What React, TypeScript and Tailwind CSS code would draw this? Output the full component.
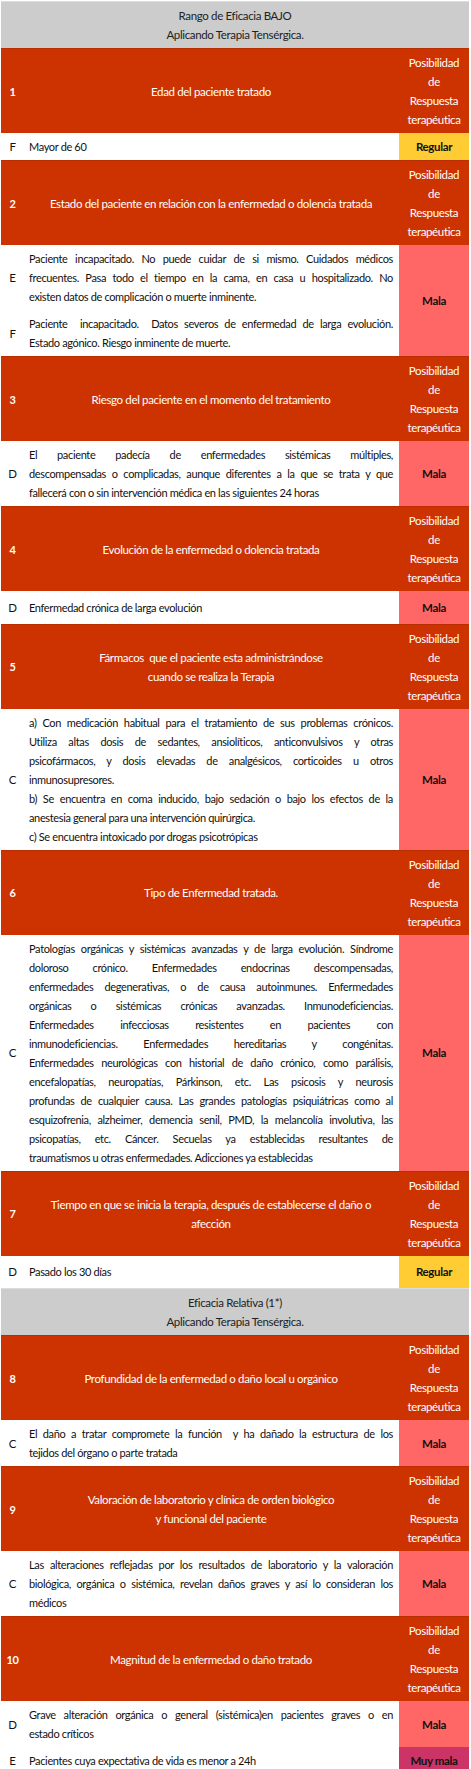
import React from "react";

type Tone = "mala" | "regular" | "muy";

type Row = {
  letter: string;
  paras: string[][];
  result?: { label: string; tone: Tone; span?: number };
  tall?: boolean;
};

type Section =
  | { kind: "header"; lines: string[] }
  | { kind: "factor"; num: string; title: string[]; rows: Row[] };

const toneCls: Record<Tone, string> = {
  mala: "bg-[#ff6666]",
  regular: "bg-[#ffcc33]",
  muy: "bg-[#cc3366]",
};

const sections: Section[] = [
  { kind: "header", lines: ["Rango de Eficacia BAJO", "Aplicando Terapia Tensérgica."] },
  {
    kind: "factor",
    num: "1",
    title: ["Edad del paciente tratado"],
    rows: [{ letter: "F", paras: [["Mayor de 60"]], result: { label: "Regular", tone: "regular" } }],
  },
  {
    kind: "factor",
    num: "2",
    title: ["Estado del paciente en relación con la enfermedad o dolencia tratada"],
    rows: [
      {
        letter: "E",
        paras: [
          [
            "Paciente incapacitado. No puede cuidar de si mismo. Cuidados médicos",
            "frecuentes. Pasa todo el tiempo en la cama, en casa u hospitalizado. No",
            "existen datos de complicación o muerte inminente.",
          ],
        ],
        result: { label: "Mala", tone: "mala", span: 2 },
      },
      {
        letter: "F",
        paras: [
          [
            "Paciente  incapacitado.  Datos severos de enfermedad de larga evolución.",
            "Estado agónico. Riesgo inminente de muerte.",
          ],
        ],
      },
    ],
  },
  {
    kind: "factor",
    num: "3",
    title: ["Riesgo del paciente en el momento del tratamiento"],
    rows: [
      {
        letter: "D",
        paras: [
          [
            "El paciente padecía de enfermedades sistémicas múltiples,",
            "descompensadas o complicadas, aunque diferentes a la que se trata y que",
            "fallecerá con o sin intervención médica en las siguientes 24 horas",
          ],
        ],
        result: { label: "Mala", tone: "mala" },
      },
    ],
  },
  {
    kind: "factor",
    num: "4",
    title: ["Evolución de la enfermedad o dolencia tratada"],
    rows: [
      {
        letter: "D",
        paras: [["Enfermedad crónica de larga evolución"]],
        result: { label: "Mala", tone: "mala" },
        tall: true,
      },
    ],
  },
  {
    kind: "factor",
    num: "5",
    title: ["Fármacos  que el paciente esta administrándose", "cuando se realiza la Terapia"],
    rows: [
      {
        letter: "C",
        paras: [
          [
            "a) Con medicación habitual para el tratamiento de sus problemas crónicos.",
            "Utiliza altas dosis de sedantes, ansiolíticos, anticonvulsivos y otras",
            "psicofármacos, y dosis elevadas de analgésicos, corticoides u otros",
            "inmunosupresores.",
          ],
          [
            "b) Se encuentra en coma inducido, bajo sedación o bajo los efectos de la",
            "anestesia general para una intervención quirúrgica.",
          ],
          ["c) Se encuentra intoxicado por drogas psicotrópicas"],
        ],
        result: { label: "Mala", tone: "mala" },
      },
    ],
  },
  {
    kind: "factor",
    num: "6",
    title: ["Tipo de Enfermedad tratada."],
    rows: [
      {
        letter: "C",
        paras: [
          [
            "Patologías orgánicas y sistémicas avanzadas y de larga evolución. Síndrome",
            "doloroso crónico. Enfermedades endocrinas descompensadas,",
            "enfermedades degenerativas, o de causa autoinmunes. Enfermedades",
            "orgánicas o sistémicas crónicas avanzadas. Inmunodeficiencias.",
            "Enfermedades infecciosas resistentes en pacientes con",
            "inmunodeficiencias. Enfermedades hereditarias y congénitas.",
            "Enfermedades neurológicas con historial de daño crónico, como parálisis,",
            "encefalopatías, neuropatías, Párkinson, etc. Las psicosis y neurosis",
            "profundas de cualquier causa. Las grandes patologías psiquiátricas como al",
            "esquizofrenia, alzheimer, demencia senil, PMD, la melancolía involutiva, las",
            "psicopatías, etc. Cáncer. Secuelas ya establecidas resultantes de",
            "traumatismos u otras enfermedades. Adicciones ya establecidas",
          ],
        ],
        result: { label: "Mala", tone: "mala" },
      },
    ],
  },
  {
    kind: "factor",
    num: "7",
    title: ["Tiempo en que se inicia la terapia, después de establecerse el daño o", "afección"],
    rows: [
      {
        letter: "D",
        paras: [["Pasado los 30 días"]],
        result: { label: "Regular", tone: "regular" },
        tall: true,
      },
    ],
  },
  { kind: "header", lines: ["Eficacia Relativa (1*)", "Aplicando Terapia Tensérgica."] },
  {
    kind: "factor",
    num: "8",
    title: ["Profundidad de la enfermedad o daño local u orgánico"],
    rows: [
      {
        letter: "C",
        paras: [
          [
            "El daño a tratar compromete la función  y ha dañado la estructura de los",
            "tejidos del órgano o parte tratada",
          ],
        ],
        result: { label: "Mala", tone: "mala" },
      },
    ],
  },
  {
    kind: "factor",
    num: "9",
    title: ["Valoración de laboratorio y clínica de orden biológico", "y funcional del paciente"],
    rows: [
      {
        letter: "C",
        paras: [
          [
            "Las alteraciones reflejadas por los resultados de laboratorio y la valoración",
            "biológica, orgánica o sistémica, revelan daños graves y así lo consideran los",
            "médicos",
          ],
        ],
        result: { label: "Mala", tone: "mala" },
      },
    ],
  },
  {
    kind: "factor",
    num: "10",
    title: ["Magnitud de la enfermedad o daño tratado"],
    rows: [
      {
        letter: "D",
        paras: [
          [
            "Grave alteración orgánica o general (sistémica)en pacientes graves o en",
            "estado críticos",
          ],
        ],
        result: { label: "Mala", tone: "mala" },
      },
      {
        letter: "E",
        paras: [["Pacientes cuya expectativa de vida es menor a 24h"]],
        result: { label: "Muy mala", tone: "muy" },
      },
    ],
  },
];

const Lines = ({ paras }: { paras: string[][] }) => (
  <>
    {paras.map((p, pi) =>
      p.map((line, i) => (
        <div
          key={`${pi}-${i}`}
          className={
            i < p.length - 1
              ? "text-justify [text-align-last:justify] whitespace-pre-wrap"
              : "text-left whitespace-pre-wrap"
          }
        >
          {line}
        </div>
      ))
    )}
  </>
);

const App = () => {
  return (
    <div className="w-[471px] min-h-[1769px] bg-white pt-[1px] font-['Lato','Open_Sans',sans-serif] text-[11px] tracking-[-0.35px] leading-[19px] text-[#111111]">
      <table className="table-fixed border-collapse w-[468px] ml-[1px]">
        <colgroup>
          <col className="w-[23px]" />
          <col className="w-[375px]" />
          <col className="w-[70px]" />
        </colgroup>
        <tbody>
          {sections.map((s, si) => {
            if (s.kind === "header") {
              return (
                <tr key={si} className="bg-[#cccccc] border-t border-[#dddddd]">
                  <td colSpan={3} className="py-[4px] text-center text-[#222222] text-[11.5px]">
                    {s.lines.map((l) => (
                      <div key={l}>{l}</div>
                    ))}
                  </td>
                </tr>
              );
            }
            return (
              <React.Fragment key={si}>
                <tr className="bg-[#cc3300] text-white border-t border-[#b82e00]">
                  <td className="py-[4px] text-center font-bold">{s.num}</td>
                  <td className="py-[4px] pl-[5px] pr-[6px] text-center text-[11.5px]">
                    {s.title.map((l) => (
                      <div key={l} className="whitespace-pre-wrap">
                        {l}
                      </div>
                    ))}
                  </td>
                  <td className="py-[4px] text-center text-[11.5px]">
                    <div>Posibilidad</div>
                    <div>de</div>
                    <div>Respuesta</div>
                    <div>terapéutica</div>
                  </td>
                </tr>
                {s.rows.map((r, ri) => (
                  <tr key={ri} className={r.tall ? "h-[33px]" : ""}>
                    <td className="py-[4px] text-center align-middle text-[11.5px]">{r.letter}</td>
                    <td className="py-[4px] pl-[5px] pr-[6px] align-middle">
                      <Lines paras={r.paras} />
                    </td>
                    {r.result && (
                      <td
                        rowSpan={r.result.span ?? 1}
                        className={`py-[4px] text-center align-middle font-bold text-[#111111] text-[11.5px] ${toneCls[r.result.tone]}`}
                      >
                        {r.result.label}
                      </td>
                    )}
                  </tr>
                ))}
              </React.Fragment>
            );
          })}
        </tbody>
      </table>
    </div>
  );
};

export default App;
